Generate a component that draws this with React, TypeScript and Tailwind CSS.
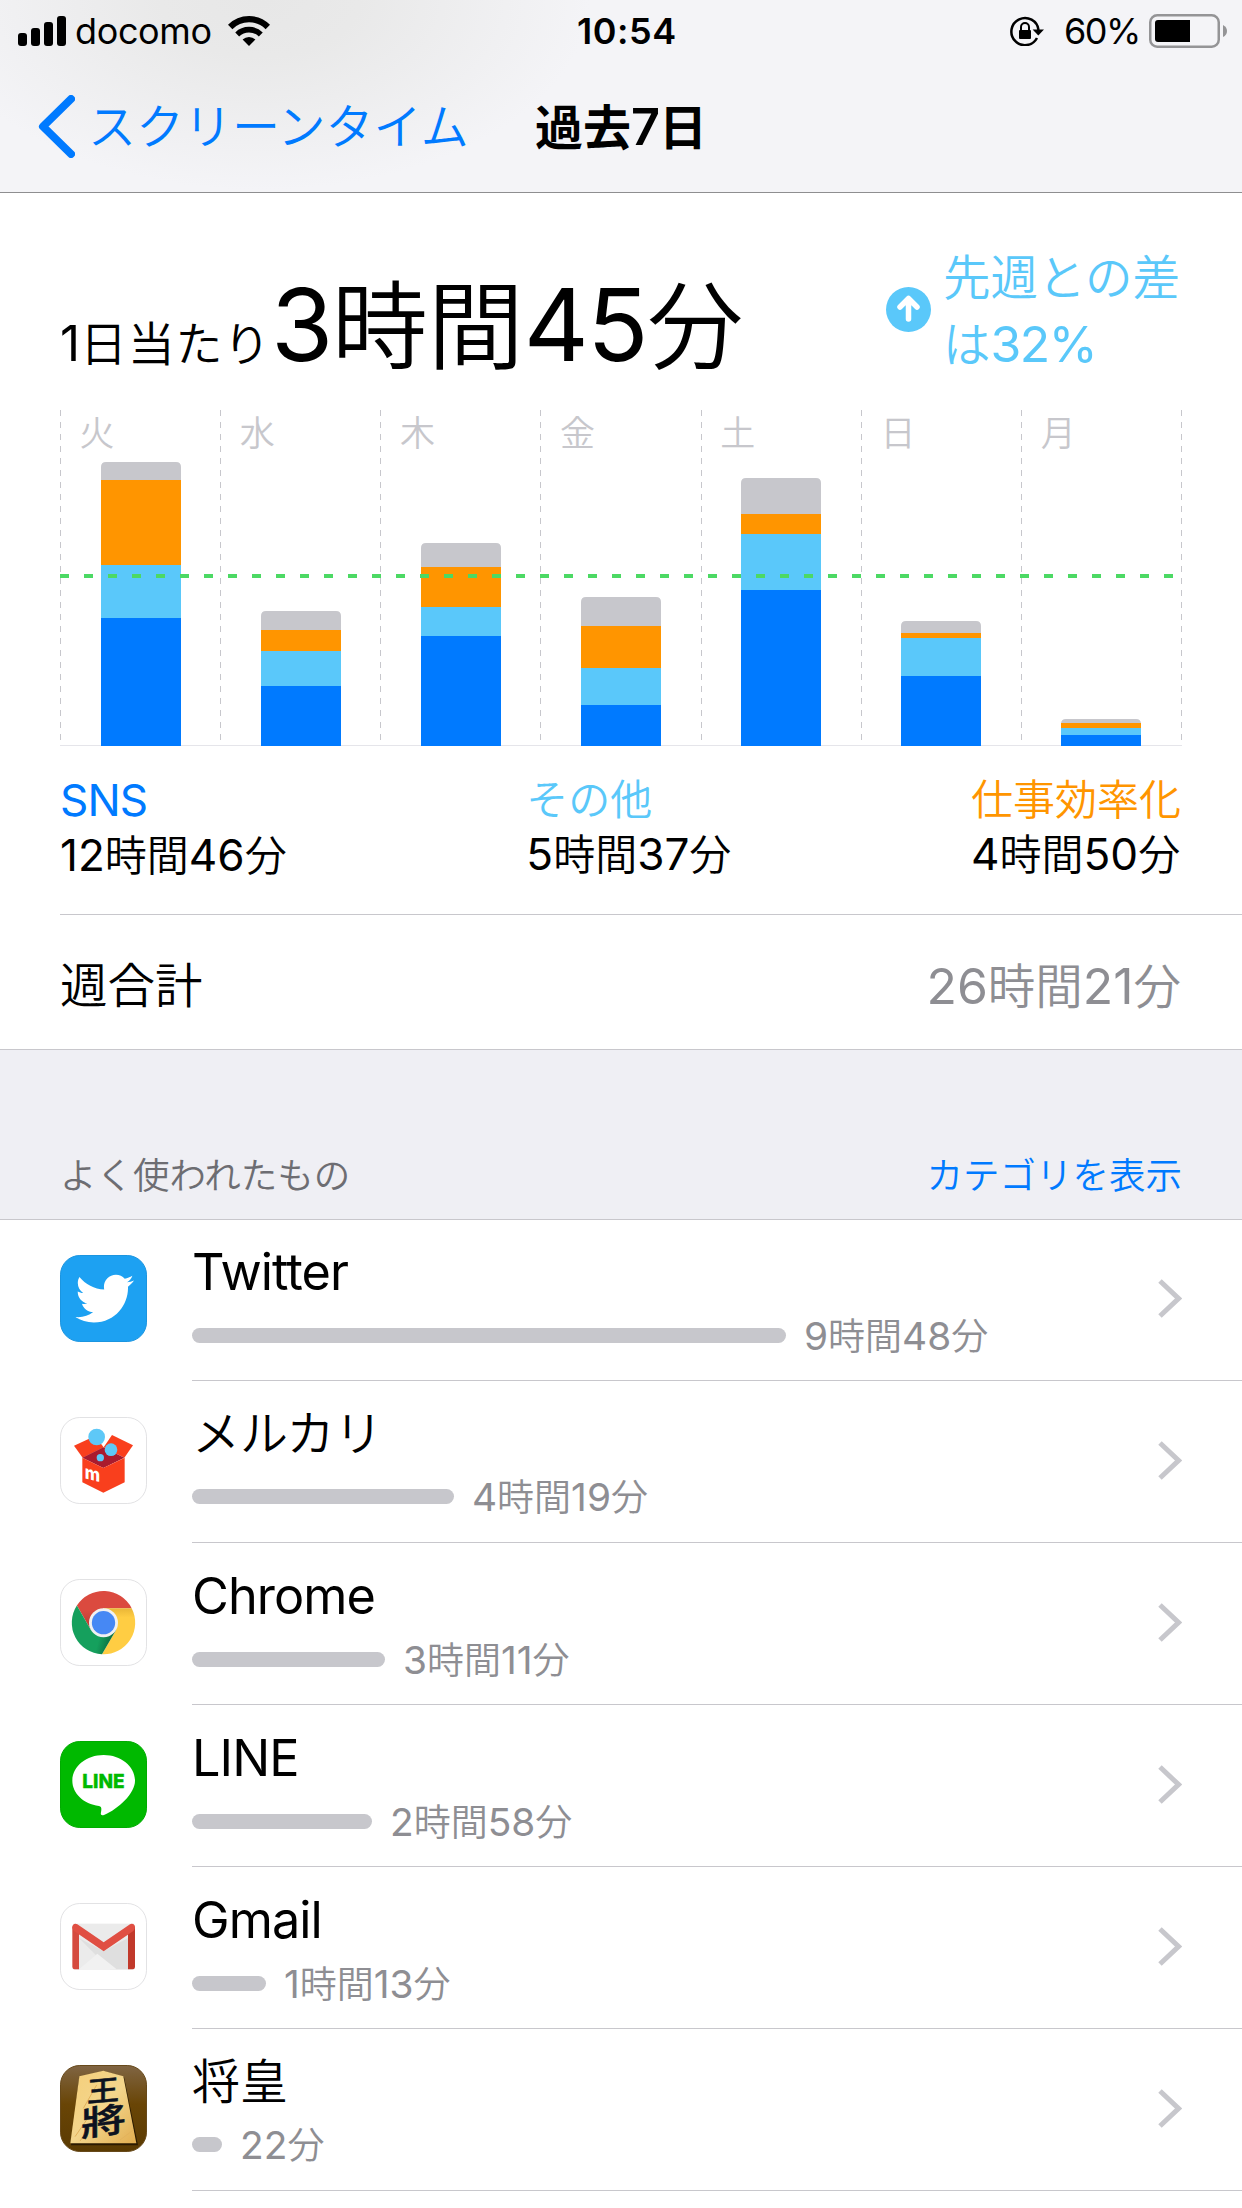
import type { ReactNode } from "react";
import { FaTwitter } from "react-icons/fa";

type Day = {
  label: string;
  // heights in px, bottom to top
  sns: number;
  other: number;
  work: number;
  rest: number;
};

const days: Day[] = [
  { label: "火", sns: 128, other: 53, work: 85, rest: 18 },
  { label: "水", sns: 60, other: 35, work: 21, rest: 19 },
  { label: "木", sns: 110, other: 29, work: 40, rest: 24 },
  { label: "金", sns: 41, other: 37, work: 42, rest: 29 },
  { label: "土", sns: 156, other: 56, work: 20, rest: 36 },
  { label: "日", sns: 70, other: 38, work: 5, rest: 12 },
  { label: "月", sns: 11, other: 7, work: 5, rest: 4 },
];

const categories = [
  { name: "SNS", time: "12時間46分", color: "text-[#007aff]" },
  { name: "その他", time: "5時間37分", color: "text-[#5ac8fa]" },
  { name: "仕事効率化", time: "4時間50分", color: "text-[#ff9500]" },
];

const apps = [
  { name: "Twitter", time: "9時間48分", width: 594, icon: <TwitterIcon /> },
  { name: "メルカリ", time: "4時間19分", width: 262, icon: <MercariIcon /> },
  { name: "Chrome", time: "3時間11分", width: 193, icon: <ChromeIcon /> },
  { name: "LINE", time: "2時間58分", width: 180, icon: <LineIcon /> },
  { name: "Gmail", time: "1時間13分", width: 74, icon: <GmailIcon /> },
  { name: "将皇", time: "22分", width: 30, icon: <ShogiIcon /> },
];

export default function App() {
  return (
    <div className="h-[2208px] w-[1242px] overflow-hidden bg-white font-['Inter','Noto_Sans_CJK_JP',sans-serif] font-[350] text-black">
      <header className="h-[193px] border-b border-[#8e8e90] bg-[#f4f4f7] bg-[radial-gradient(ellipse_330px_190px_at_260px_0px,#e7e7e7_0%,#e9e9e9_30%,#f4f4f7_100%)]">
        <StatusBar />
        <nav className="flex h-[132px] items-center pl-[38px]">
          <svg className="h-[63px] w-[37px]" viewBox="0 0 37 63" fill="none">
            <path
              d="M33 4 L5 31.5 L33 59"
              stroke="#007aff"
              strokeWidth="8"
              strokeLinecap="round"
              strokeLinejoin="round"
            />
          </svg>
          <span className="ml-[13px] w-[447px] pt-0.5 text-[48px] leading-[60px] text-[#007aff]">
            スクリーンタイム
          </span>
          <h1 className="pt-0.5 text-[48px] leading-[60px] font-bold">
            <Mixed text="過去7日" latin="font-semibold tracking-[-0.02em]" />
          </h1>
        </nav>
      </header>

      <section className="flex h-[217px] justify-between pt-[52px] pr-[61px] pl-[60px]">
        <div className="mt-[13px] flex h-[132px] items-baseline leading-[132px]">
          <span className="w-[211px] text-[47px] tracking-[0.015em] whitespace-nowrap">
            <Mixed text="1日当たり" />
          </span>
          <span className="text-[96px]">
            <Mixed text="3時間45分" latin="font-normal tracking-[-0.015em]" />
          </span>
        </div>
        <div className="flex h-[132px] items-center text-[#5ac8fa]">
          <ArrowBadge />
          <p className="ml-3 w-[238px] text-[47.5px] leading-[66px] whitespace-nowrap">
            先週との差
            <br />
            <Mixed text="は32%" latin="font-normal tracking-[-0.03em]" />
          </p>
        </div>
      </section>

      <UsageChart />

      <section className="ml-[60px] flex h-[169px] justify-between border-b border-[#c8c7cc] pt-[27px] pr-[61px]">
        {categories.map((c) => (
          <div key={c.name} className="text-[42px] leading-[54px]">
            <p className={c.color}>
              <Mixed text={c.name} latin="font-normal tracking-[-0.02em]" />
            </p>
            <p>
              <Mixed text={c.time} />
            </p>
          </div>
        ))}
      </section>

      <section className="flex h-[135px] items-center justify-between border-b border-[#c8c7cc] pt-2 pr-[61px] pl-[60px] text-[47.5px] leading-[60px]">
        <span>週合計</span>
        <span className="text-[#8e8e93]">
          <Mixed text="26時間21分" />
        </span>
      </section>

      <section className="flex h-[170px] items-end justify-between border-b border-[#c8c7cc] bg-[#efeff4] pr-[60px] pb-[25px] pl-[60px] text-[36.5px] leading-9">
        <span className="text-[#6d6d72]">よく使われたもの</span>
        <span className="text-[#007aff]">カテゴリを表示</span>
      </section>

      <ul className="-mt-px">
        {apps.map((app) => (
          <li key={app.name} className="flex h-[162px] pl-[60px]">
            <div className="mt-9 size-[87px] shrink-0">{app.icon}</div>
            <div className="ml-[45px] flex flex-1 border-b border-[#c8c7cc] pr-[60px]">
              <div className="h-full flex-1 pt-[23px]">
                <p className="text-[48px] leading-[60px]">
                  <Mixed text={app.name} latin="font-normal tracking-[-0.018em]" />
                </p>
                <div className="mt-3 flex h-[41px] items-center">
                  <div
                    className="h-[15px] rounded-full bg-[#c7c7cc]"
                    style={{ width: app.width }}
                  />
                  <span className="ml-[18px] text-[37px] leading-[41px] text-[#8e8e93]">
                    <Mixed text={app.time} />
                  </span>
                </div>
              </div>
              <svg className="mt-[60px] h-[39px] w-6" viewBox="0 0 24 39" fill="none">
                <path d="M2 2 L20.5 19.5 L2 37" stroke="#c7c7cc" strokeWidth="5" />
              </svg>
            </div>
          </li>
        ))}
      </ul>
    </div>
  );
}

// Latin letters and digits sit a little larger than the kanji next to them.
function Mixed({ text, latin = "font-normal tracking-normal" }: { text: string; latin?: string }) {
  return (
    <>
      {text.split(/([\x21-\x7e]+)/).map((part, i) =>
        i % 2 ? (
          <span key={i} className={`text-[1.05em] ${latin}`}>
            {part}
          </span>
        ) : (
          part
        ),
      )}
    </>
  );
}

function StatusBar() {
  return (
    <div className="grid h-[60px] grid-cols-[577px_auto_1fr] items-center text-[36px] leading-[60px] font-normal">
      <div className="flex items-center pl-[18px]">
        <svg className="h-[30px] w-12" viewBox="0 0 48 30">
          <rect x="0" y="17" width="9" height="13" rx="3" />
          <rect x="13" y="12" width="9" height="18" rx="3" />
          <rect x="26" y="6" width="9" height="24" rx="3" />
          <rect x="39" y="0" width="9" height="30" rx="3" />
        </svg>
        <span className="ml-[9px] w-[153px] pt-px tracking-[-0.01em]">docomo</span>
        <svg className="h-[30px] w-[42px]" viewBox="0 0 42 30" fill="none" stroke="#000">
          <path d="M2.2 11 A26.5 26.5 0 0 1 39.8 11" strokeWidth="6.2" />
          <path d="M9.2 18.4 A17 17 0 0 1 32.8 18.4" strokeWidth="5.6" />
          <path d="M21 30 L14.6 23.6 A9.4 9.4 0 0 1 27.4 23.6 Z" fill="#000" stroke="none" />
        </svg>
      </div>
      <span className="pt-px font-semibold tracking-[0.015em]">10:54</span>
      <div className="flex items-center justify-end pr-[15px]">
        <svg className="mr-[19px] h-[30px] w-[35px]" viewBox="0 0 35 30" fill="none">
          <path d="M27 22 A13.6 13.6 0 1 1 28.5 14" stroke="#000" strokeWidth="2.5" />
          <path d="M22.6 13.5 H34 L28.3 19.5 Z" fill="#000" />
          <rect x="9" y="14" width="12" height="9" rx="1" fill="#000" />
          <path d="M11 15 V11 A4 4 0 0 1 19 11 V15" stroke="#000" strokeWidth="2" />
        </svg>
        <span className="mr-[9px] pt-px tracking-[-0.04em]">60%</span>
        <svg className="h-[34px] w-[78px]" viewBox="0 0 78 34">
          <rect x="1.25" y="1.25" width="68.5" height="31.5" rx="7" fill="none" stroke="#949496" strokeWidth="2.5" />
          <path d="M9 6 H41 V28 H9 Q6 28 6 25 V9 Q6 6 9 6Z" />
          <path d="M74 11 Q78 13 78 17 Q78 21 74 23Z" fill="#949496" />
        </svg>
      </div>
    </div>
  );
}

function ArrowBadge() {
  return (
    <svg className="mb-[3px] size-[45px]" viewBox="0 0 45 45" fill="none">
      <circle cx="22.5" cy="22.5" r="22.5" fill="#5ac8fa" />
      <path
        d="M22.5 32 V12 M14 20 L22.5 11.5 L31 20"
        stroke="#fff"
        strokeWidth="5.5"
        strokeLinecap="round"
        strokeLinejoin="round"
      />
    </svg>
  );
}

function UsageChart() {
  const base = 336;

  return (
    <svg className="ml-[60px] block h-[336px] w-[1122px]" viewBox="0 0 1122 336">
      <rect x="0" y="335" width="1122" height="1" fill="#e5e5ea" />
      {[0, 160, 320, 480, 641, 801, 961, 1121].map((x) => (
        <path key={x} d={`M${x + 0.5} 0 V330`} stroke="#c7c7cc" strokeDasharray="6 6" />
      ))}
      {days.map((d, i) => {
        const x = 41 + i * 160;
        const workY = base - d.sns - d.other - d.work;
        const top = workY - d.rest;
        return (
          <g key={d.label}>
            <text x={i * 160.2 + 19.5} y="36" fontSize="35" fill="#c7c7cc">
              {d.label}
            </text>
            <path
              d={`M${x} ${workY} V${top + 5} Q${x} ${top} ${x + 5} ${top} H${x + 75} Q${x + 80} ${top} ${x + 80} ${top + 5} V${workY}Z`}
              fill="#c7c7cc"
            />
            <rect x={x} y={workY} width="80" height={d.work} fill="#ff9500" />
            <rect x={x} y={base - d.sns - d.other} width="80" height={d.other} fill="#5ac8fa" />
            <rect x={x} y={base - d.sns} width="80" height={d.sns} fill="#007aff" />
          </g>
        );
      })}
      <path d="M0 166 H1122" stroke="#4cd964" strokeWidth="4" strokeDasharray="9 15" />
    </svg>
  );
}

function Tile({ children, fill = "#fff", edge = "#e2e2e4" }: { children: ReactNode; fill?: string; edge?: string }) {
  return (
    <svg className="size-[87px]" viewBox="0 0 261 261">
      <rect x="1.5" y="1.5" width="258" height="258" rx="58" fill={fill} stroke={edge} strokeWidth="3" />
      {children}
    </svg>
  );
}

function TwitterIcon() {
  return (
    <Tile fill="#1da1f2" edge="#1b95e0">
      <FaTwitter x="46" y="43" size="176" color="#fff" />
    </Tile>
  );
}

function MercariIcon() {
  return (
    <Tile>
      <path d="M42 86 L105 57 L131 91 L68 122Z" fill="#f93f1d" />
      <path d="M156 54 L219 85 L193 122 L131 91Z" fill="#f93f1d" />
      <path d="M67 122 L130 91 L193 122 L130 153Z" fill="#a91b2e" />
      <path d="M67 122 L130 153 L194 122 V196 L130 227 L67 196Z" fill="#f93f1d" />
      <circle cx="110" cy="60" r="25" fill="#5ec8f7" />
      <circle cx="153" cy="98" r="19" fill="#5ec8f7" />
      <circle cx="121" cy="122" r="11" fill="#5ec8f7" />
      <text
        transform="translate(74 184) skewY(14)"
        fontSize="56"
        fontWeight="800"
        fill="#fff"
        textLength="46"
        lengthAdjust="spacingAndGlyphs"
      >
        m
      </text>
    </Tile>
  );
}

function ChromeIcon() {
  return (
    <Tile>
      <defs>
        <linearGradient id="c-red" x1="0" y1="0" x2="0" y2="1">
          <stop offset="0.5" stopColor="#db4a3f" />
          <stop offset="1" stopColor="#b63a30" />
        </linearGradient>
        <linearGradient id="c-yellow" x1="0" y1="0" x2="0" y2="1">
          <stop offset="0" stopColor="#e9b637" />
          <stop offset="0.2" stopColor="#ffcd43" />
        </linearGradient>
        <linearGradient id="c-green" x1="0" y1="0" x2="1" y2="0.3">
          <stop offset="0.75" stopColor="#15a05d" />
          <stop offset="1" stopColor="#0d7343" />
        </linearGradient>
      </defs>
      <path d="M50.6 79.6 A95 95 0 0 1 215 87.5 H130.5 L92.8 152.7Z" fill="url(#c-red)" />
      <path d="M215 87.5 A95 95 0 0 1 126 226 L168.2 152.7 L130.5 87.5Z" fill="url(#c-yellow)" />
      <path d="M126 226 A95 95 0 0 1 50.6 79.6 L92.8 152.7 H168.2Z" fill="url(#c-green)" />
      <circle cx="130.5" cy="131" r="43.5" fill="#f1f1f1" />
      <circle cx="130.5" cy="131" r="35" fill="#4688f4" />
    </Tile>
  );
}

function LineIcon() {
  return (
    <Tile fill="#00b900" edge="#00ab00">
      <path
        d="M131 42 C183 42 225 76 225 119 C225 157 176 203 132 222 C124 225 121 221 123 214 C125 202 125 197 117 195 C70 188 37 157 37 119 C37 76 79 42 131 42Z"
        fill="#fff"
      />
      <text
        x="67"
        y="141"
        fontSize="58"
        fontWeight="800"
        fill="#00b900"
        stroke="#00b900"
        textLength="127"
        lengthAdjust="spacingAndGlyphs"
      >
        LINE
      </text>
    </Tile>
  );
}

function GmailIcon() {
  return (
    <Tile>
      <rect x="40" y="62" width="182" height="138" fill="#ebebeb" />
      <path d="M57 105 L131 145 L204 105 V199 H150 L57 105Z" fill="#dfdfdf" />
      <path d="M57 199 L112 152 L170 199Z" fill="#f1f1f1" />
      <path d="M37 70 L57 88 V199 H44 Q37 199 37 192Z" fill="#d54b3f" />
      <path d="M225 70 L204 88 V199 H218 Q225 199 225 192Z" fill="#c1392b" />
      <path
        d="M37 73 Q37 62 47 62 L52 64 L131 118 L210 64 L215 62 Q225 62 225 73 Q225 80 220 84 L131 145 L42 84 Q37 80 37 73Z"
        fill="#e04f43"
      />
    </Tile>
  );
}

function ShogiIcon() {
  return (
    <Tile fill="url(#s-back)" edge="#67491a">
      <defs>
        <linearGradient id="s-back" x1="0" y1="0" x2="0" y2="1">
          <stop offset="0" stopColor="#806543" />
          <stop offset="0.45" stopColor="#694506" />
          <stop offset="1" stopColor="#5a3a02" />
        </linearGradient>
        <linearGradient id="s-wood" x1="0" y1="0" x2="1" y2="1">
          <stop offset="0" stopColor="#f5cf7a" />
          <stop offset="0.5" stopColor="#f3d58c" />
          <stop offset="1" stopColor="#e2ae50" />
        </linearGradient>
      </defs>
      <path d="M131 18 L192 36 L234 241 H33 L58 36Z" fill="#2b1a00" />
      <path d="M130 17 L190 34 L229 235 H31 L58 34Z" fill="url(#s-wood)" />
      <path d="M45 215 L90 150 M60 228 L110 160 M180 225 L220 195 M70 130 L110 60" stroke="#e3b25c" strokeWidth="3" />
      <g fill="#0c1220" fontWeight="500" stroke="#0c1220" strokeWidth="1.5" textAnchor="middle">
        <text transform="translate(129 108) skewY(-5) scale(1.12 1)" fontSize="86">
          王
        </text>
        <text transform="translate(130 206) skewY(-8) scale(1.32 1)" fontSize="102">
          將
        </text>
      </g>
    </Tile>
  );
}
